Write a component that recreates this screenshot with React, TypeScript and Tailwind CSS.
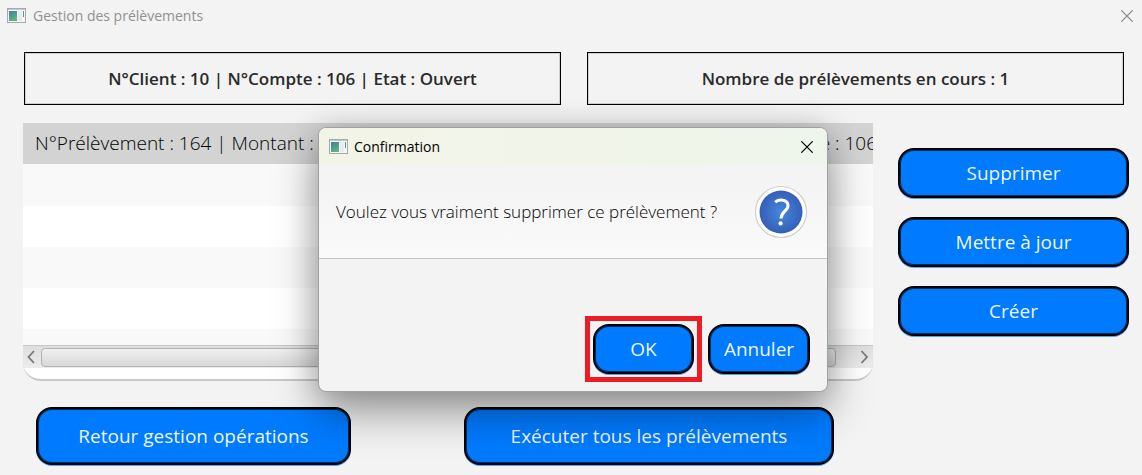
import React from "react";

function WindowIcon() {
  return (
    <svg width="19" height="16" viewBox="0 0 19 16" aria-hidden="true" className="shrink-0">
      <defs>
        <linearGradient id="pane" x1="0" y1="0" x2="0.4" y2="1">
          <stop offset="0" stopColor="#3f7fa3" />
          <stop offset="1" stopColor="#5fb37c" />
        </linearGradient>
      </defs>
      <rect x="0.5" y="0.5" width="18" height="14" fill="#f6f6f8" stroke="#a3a8b3" />
      <rect x="1" y="1" width="17" height="1" fill="#c5c8cf" />
      <rect x="2" y="3" width="8" height="10" fill="url(#pane)" />
      <rect x="11" y="3" width="4" height="10" fill="#e9ebee" />
      <rect x="16" y="3" width="1" height="6" fill="#4d9a90" />
    </svg>
  );
}

function CloseIcon() {
  return (
    <svg width="12" height="12" viewBox="0 0 12 12" fill="none" stroke="currentColor" aria-hidden="true">
      <path d="M0.3 0.3L11.7 11.7M11.7 0.3L0.3 11.7" strokeWidth="1.2" />
    </svg>
  );
}

function QuestionIcon() {
  return (
    <svg width="54" height="54" viewBox="0 0 54 54" aria-hidden="true" className="shrink-0">
      <defs>
        <radialGradient id="disc">
          <stop offset="0" stopColor="#4688dc" />
          <stop offset="1" stopColor="#355fb9" />
        </radialGradient>
      </defs>
      <circle cx="27" cy="27" r="25.5" fill="#fff" stroke="#cfcfcf" strokeWidth="1.2" />
      <circle cx="27" cy="27" r="21.5" fill="url(#disc)" />
      <path
        d="M21.2 17.2C24 14 34 13.8 34 20.8C34 26 27 26.6 27 33.6"
        fill="none"
        stroke="#fff"
        strokeWidth="3"
      />
      <circle cx="26.6" cy="38.4" r="2.1" fill="#fff" />
    </svg>
  );
}

function ActionButton({ children, className }: { children: React.ReactNode; className: string }) {
  return (
    <button
      type="button"
      className={`rounded-2xl border-2 border-black bg-[#007bff] text-[19px] whitespace-nowrap text-white/95 shadow-[0_1px_0_#4da3ff,inset_0_0_0_1px_#002a58] ${className}`}
    >
      {children}
    </button>
  );
}

function Summary({ children }: { children: React.ReactNode }) {
  return (
    <div className="flex h-[53px] flex-1 items-center justify-center border border-black pt-px text-[17px] font-semibold text-[#2a2a2a] shadow-[inset_0_0_0_1px_#cfcfcf]">
      {children}
    </div>
  );
}

function ScrollBar() {
  return (
    <div className="flex h-[23px] items-center gap-1 border-t border-[#c8c8c8] bg-linear-to-b from-[#dedede] to-[#ececec] px-1">
      <svg width="9" height="14" viewBox="0 0 9 14" fill="none" stroke="#777" strokeWidth="1.8" aria-hidden="true">
        <path d="M7 1L1.5 7L7 13" />
      </svg>
      <div className="flex-1 pr-5 pl-px">
        <div className="h-[19px] rounded border border-[#b3b3b3] bg-linear-to-b from-[#f0f0f0] to-[#d8d8d8]" />
      </div>
      <svg width="9" height="14" viewBox="0 0 9 14" fill="none" stroke="#777" strokeWidth="1.8" aria-hidden="true">
        <path d="M1.5 1L7 7L1.5 13" />
      </svg>
    </div>
  );
}

function DebitList() {
  return (
    <div className="min-w-0 flex-1 overflow-hidden rounded-b-[18px] border-b-2 border-[#c8c8c8] bg-white">
      <ul className="h-[222px] overflow-hidden text-[19px] font-light text-black">
        <li className="flex h-[41px] items-center justify-between bg-[#d3d3d3] pl-3 whitespace-nowrap">
          <span>N°Prélèvement : 164 | Montant :</span>
          <span className="-mr-1">N°Compte : 106</span>
        </li>
        <li className="h-[42px] bg-[#f9f9f9]" />
        <li className="h-[41px] bg-white" />
        <li className="h-[41px] bg-[#f9f9f9]" />
        <li className="h-[41px] bg-white" />
        <li className="h-[41px] bg-[#f9f9f9]" />
      </ul>
      <ScrollBar />
      <div className="h-[11px]" />
    </div>
  );
}

function ConfirmDialog() {
  return (
    <div className="absolute inset-0 flex items-start justify-center pt-[127px] pl-1">
      <section
        role="dialog"
        aria-labelledby="confirm-title"
        className="w-[510px] overflow-hidden rounded-lg border border-[#a0a0a0] bg-[#f3f3f3] shadow-[0_20px_44px_rgba(0,0,0,0.38),0_0_30px_rgba(0,0,0,0.14)]"
      >
        <header className="flex h-[37px] items-center bg-linear-to-r from-[#f3f4e8] to-[#eef5ea] pr-[14px] pl-[10px]">
          <WindowIcon />
          <h2 id="confirm-title" className="ml-1.5 flex-1 text-sm text-black">
            Confirmation
          </h2>
          <button type="button" aria-label="Fermer la confirmation" className="text-black">
            <CloseIcon />
          </button>
        </header>
        <div className="flex h-[94px] items-center justify-between border-b border-[#c4c4c4] bg-linear-to-b from-[#f3f3f3] to-[#fafafa] pr-[19px] pl-[17px]">
          <p className="pt-px text-[17px] font-light whitespace-nowrap text-black">
            Voulez vous vraiment supprimer ce prélèvement ?
          </p>
          <QuestionIcon />
        </div>
        <div className="flex items-center justify-end gap-1.5 pt-[57px] pr-[17px] pb-[9px]">
          <div className="border-5 border-[#ed1c24] p-[3px]">
            <ActionButton className="h-[50px] w-[101px]">OK</ActionButton>
          </div>
          <ActionButton className="h-[50px] w-[102px]">Annuler</ActionButton>
        </div>
      </section>
    </div>
  );
}

export default function App() {
  return (
    <div className="relative min-h-screen overflow-hidden bg-[#f3f3f3] font-['Open_Sans','Noto_Sans',sans-serif]">
      <header className="flex h-[31px] items-center pr-[9px] pl-[7px]">
        <WindowIcon />
        <h1 className="ml-[7px] flex-1 text-[14px] text-[#909090]">Gestion des prélèvements</h1>
        <button type="button" aria-label="Fermer" className="text-[#888]">
          <CloseIcon />
        </button>
      </header>
      <main>
        <div className="flex gap-[26px] pt-[21px] pr-[18px] pl-6">
          <Summary>N°Client : 10 | N°Compte : 106 | Etat : Ouvert</Summary>
          <Summary>Nombre de prélèvements en cours : 1</Summary>
        </div>
        <div className="flex gap-[25px] pt-[18px] pr-[13px] pl-[23px]">
          <DebitList />
          <div className="flex w-[231px] flex-col gap-[19px] pt-[25px]">
            <ActionButton className="h-[50px]">Supprimer</ActionButton>
            <ActionButton className="h-[50px]">Mettre à jour</ActionButton>
            <ActionButton className="h-[50px]">Créer</ActionButton>
          </div>
        </div>
        <div className="flex gap-[113px] pt-[26px] pb-2 pl-9">
          <ActionButton className="h-[58px] w-[315px]">Retour gestion opérations</ActionButton>
          <ActionButton className="h-[58px] w-[370px]">Exécuter tous les prélèvements</ActionButton>
        </div>
      </main>
      <ConfirmDialog />
    </div>
  );
}
